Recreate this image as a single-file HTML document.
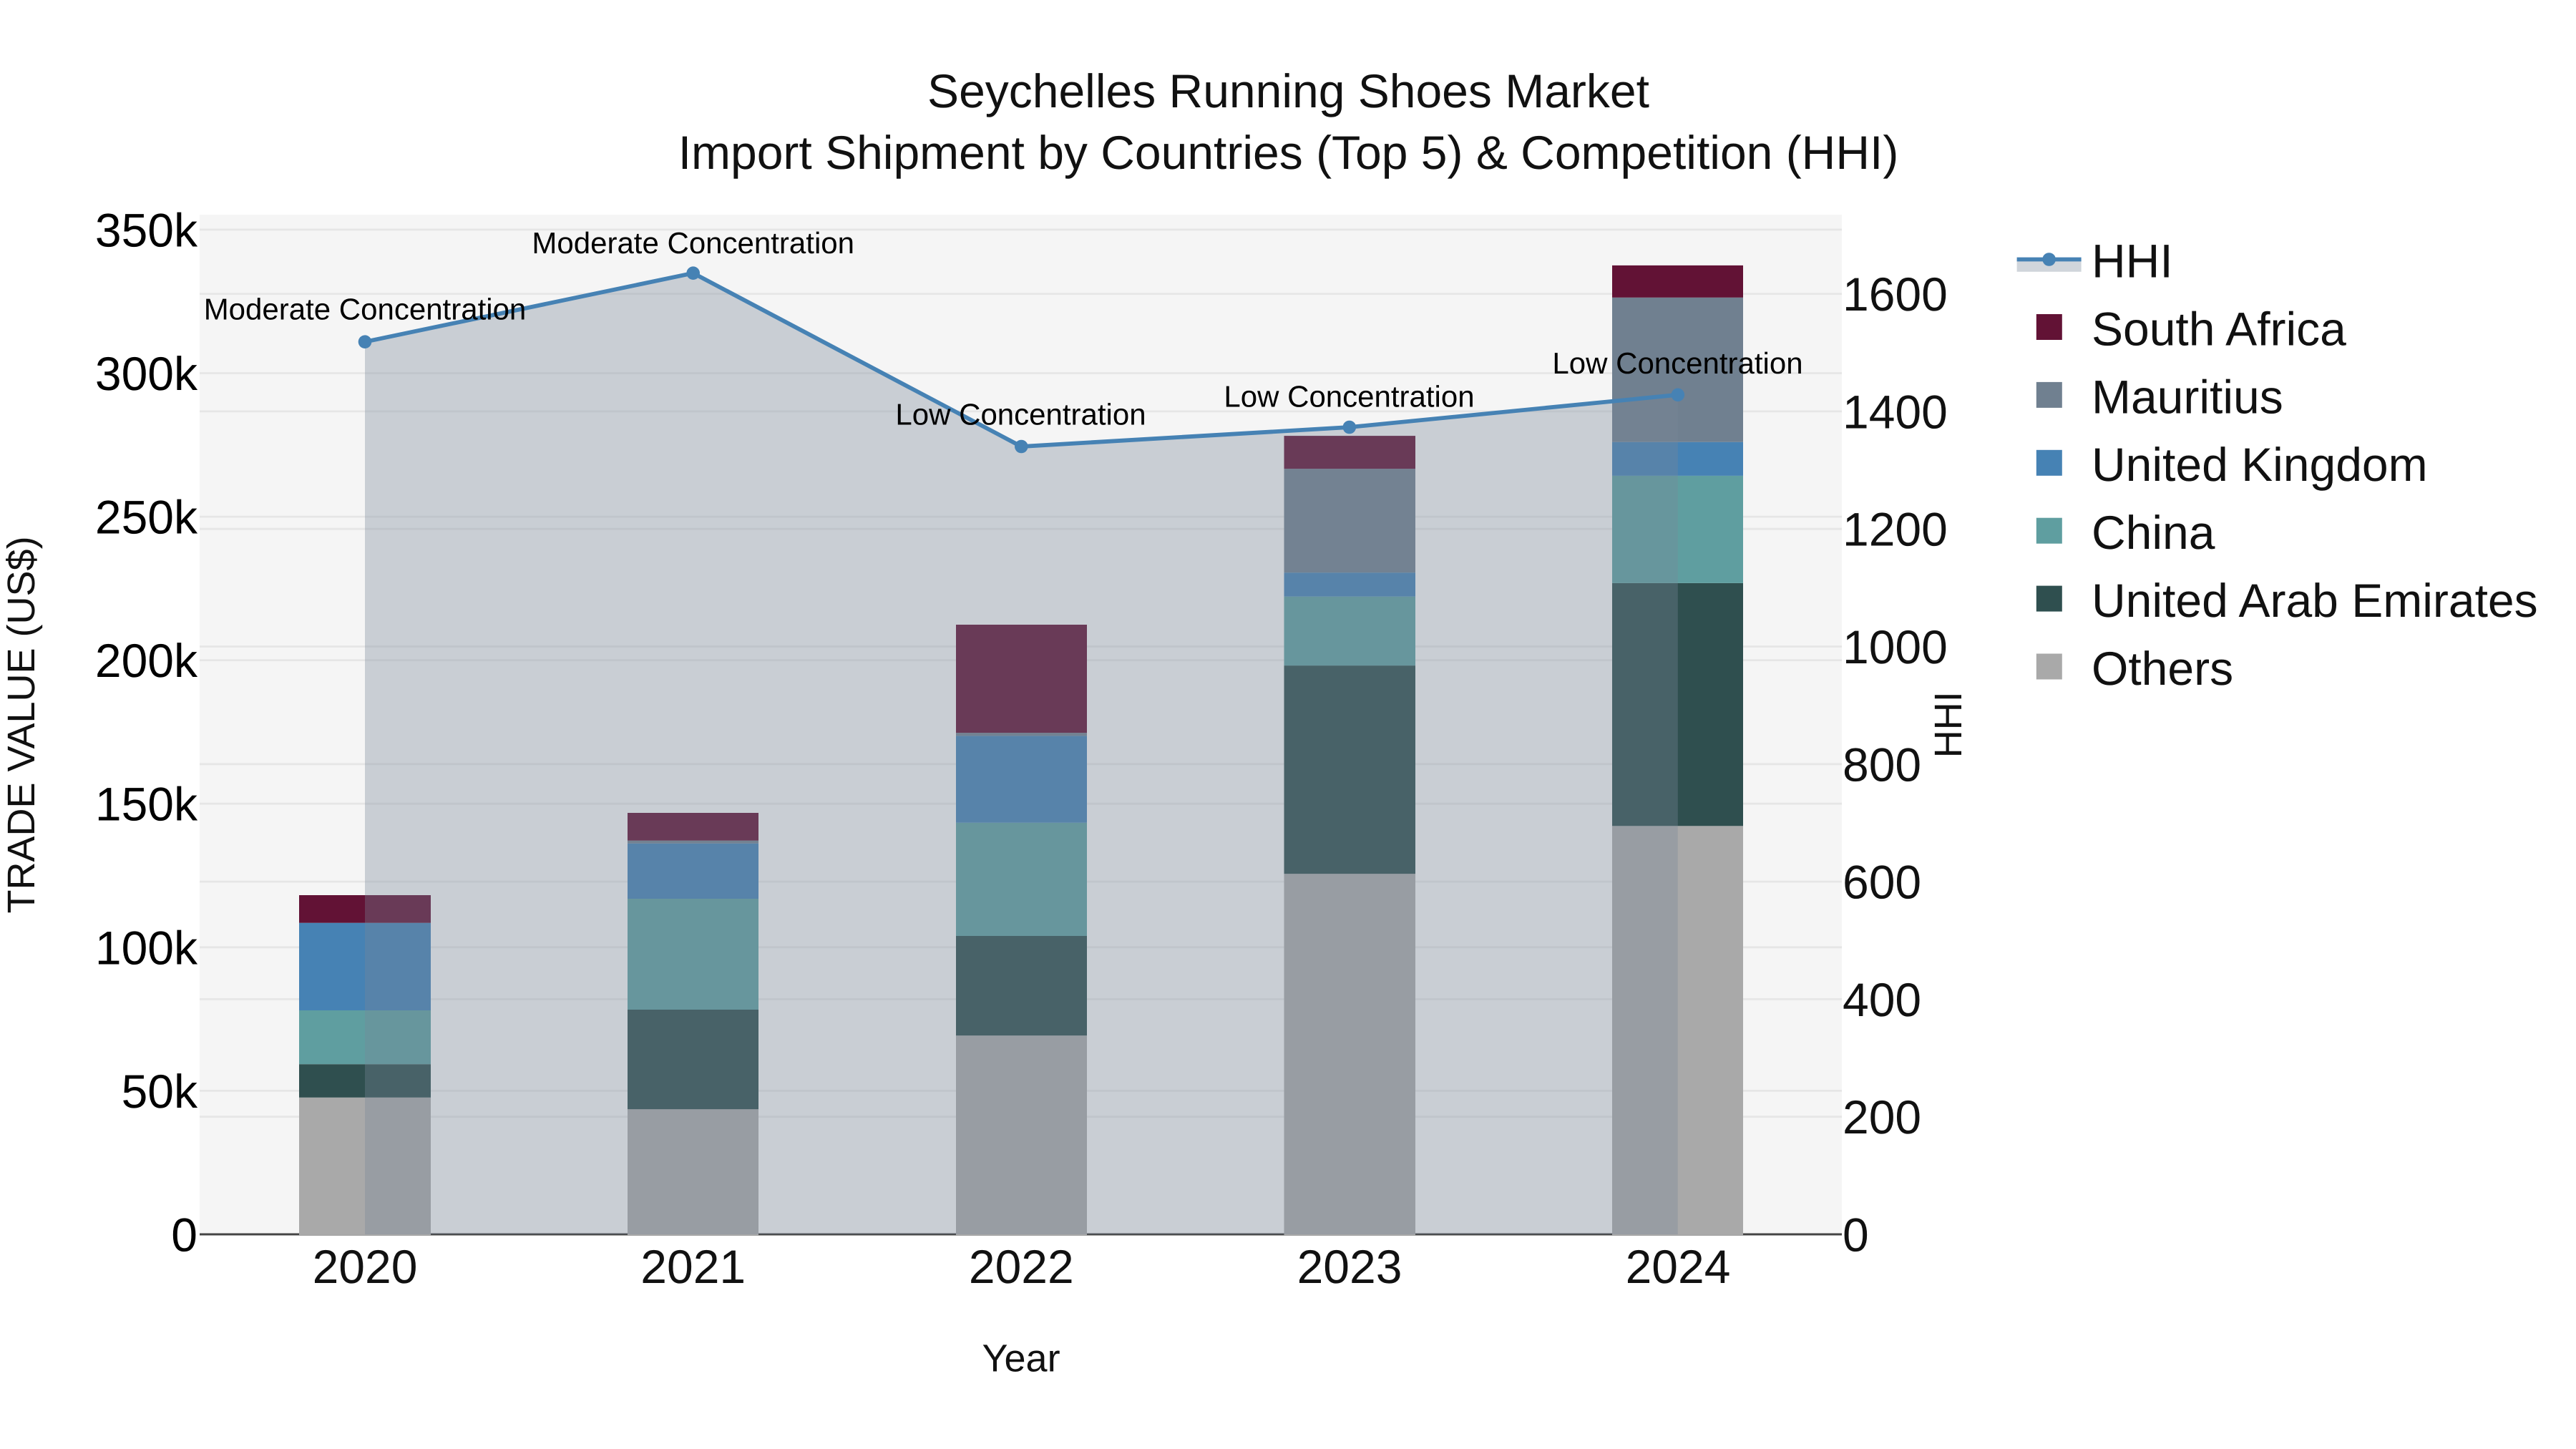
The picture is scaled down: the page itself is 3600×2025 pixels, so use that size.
<!DOCTYPE html>
<html lang="en"><head><meta charset="utf-8"><title>Seychelles Running Shoes Market</title>
<style>
html,body{margin:0;padding:0;background:#fff;width:3600px;height:2025px;overflow:hidden}
svg{display:block}
text{font-family:"Liberation Sans",Arial,sans-serif;fill:#111;text-rendering:geometricPrecision;white-space:pre}
.t{font-size:66px}
.a{font-size:42px;fill:#000;text-anchor:middle}
.k{font-size:66px;fill:#000;text-anchor:end}
.x{font-size:66px;text-anchor:middle}
.at{font-size:54px}
</style></head><body>
<svg width="3600" height="2025" viewBox="0 0 3600 2025" xmlns="http://www.w3.org/2000/svg">
<rect width="3600" height="2025" fill="#fff"/>
<rect x="279" y="300" width="2295" height="1425" fill="#f5f5f5"/>
<g stroke="#e6e6e6" stroke-width="2.8" fill="none">
<path d="M279 320.9H2574M279 521.5H2574M279 722.1H2574M279 922.6H2574M279 1123.2H2574M279 1323.8H2574M279 1524.4H2574"/>
<path d="M279 410.6H2574M279 574.9H2574M279 739.2H2574M279 903.5H2574M279 1067.8H2574M279 1232.1H2574M279 1396.4H2574M279 1560.7H2574"/>
</g>
<rect x="279" y="1723.5" width="2295" height="3" fill="#444"/>
<g>
<rect x="418" y="1533.8" width="184" height="192.2" fill="#a9a9a9"/>
<rect x="418" y="1487.2" width="184" height="46.6" fill="#2f4f4f"/>
<rect x="418" y="1412" width="184" height="75.2" fill="#5f9ea0"/>
<rect x="418" y="1289.7" width="184" height="122.3" fill="#4682b4"/>
<rect x="418" y="1251" width="184" height="38.7" fill="#621235"/>

<rect x="877" y="1550.2" width="183" height="175.8" fill="#a9a9a9"/>
<rect x="877" y="1411" width="183" height="139.2" fill="#2f4f4f"/>
<rect x="877" y="1256" width="183" height="155" fill="#5f9ea0"/>
<rect x="877" y="1178.7" width="183" height="77.3" fill="#4682b4"/>
<rect x="877" y="1174.7" width="183" height="4" fill="#708090"/>
<rect x="877" y="1136" width="183" height="38.7" fill="#621235"/>

<rect x="1336" y="1447.2" width="183" height="278.8" fill="#a9a9a9"/>
<rect x="1336" y="1308" width="183" height="139.2" fill="#2f4f4f"/>
<rect x="1336" y="1149.8" width="183" height="158.2" fill="#5f9ea0"/>
<rect x="1336" y="1028.4" width="183" height="121.4" fill="#4682b4"/>
<rect x="1336" y="1024.1" width="183" height="4.3" fill="#708090"/>
<rect x="1336" y="873" width="183" height="151.1" fill="#621235"/>

<rect x="1794.5" y="1221.2" width="183.5" height="504.8" fill="#a9a9a9"/>
<rect x="1794.5" y="930.1" width="183.5" height="291.1" fill="#2f4f4f"/>
<rect x="1794.5" y="833.7" width="183.5" height="96.4" fill="#5f9ea0"/>
<rect x="1794.5" y="800.2" width="183.5" height="33.5" fill="#4682b4"/>
<rect x="1794.5" y="655.1" width="183.5" height="145.1" fill="#708090"/>
<rect x="1794.5" y="609.1" width="183.5" height="46" fill="#621235"/>

<rect x="2253" y="1154.3" width="183" height="571.7" fill="#a9a9a9"/>
<rect x="2253" y="814.9" width="183" height="339.4" fill="#2f4f4f"/>
<rect x="2253" y="664.9" width="183" height="150" fill="#5f9ea0"/>
<rect x="2253" y="617.7" width="183" height="47.2" fill="#4682b4"/>
<rect x="2253" y="415.8" width="183" height="201.9" fill="#708090"/>
<rect x="2253" y="370.9" width="183" height="44.9" fill="#621235"/>
</g>
<path d="M510 477.7L968.7 381.7L1427.3 624L1885.8 597L2344.8 551.8V1725H510Z" fill="rgb(119,136,153)" fill-opacity=".35"/>
<path d="M510 477.7L968.7 381.7L1427.3 624L1885.8 597L2344.8 551.8" fill="none" stroke="#4682b4" stroke-width="5.8"/>
<g fill="#4682b4">
<circle cx="510" cy="477.7" r="9.3"/><circle cx="968.7" cy="381.7" r="9.3"/><circle cx="1427.3" cy="624" r="9.3"/><circle cx="1885.8" cy="597" r="9.3"/><circle cx="2344.8" cy="551.8" r="9.3"/>
</g>
<text class="a" x="510" y="446.4">Moderate Concentration</text>
<text class="a" x="968.7" y="354">Moderate Concentration</text>
<text class="a" x="1426.5" y="593.3">Low Concentration</text>
<text class="a" x="1885.5" y="568.6">Low Concentration</text>
<text class="a" x="2344.5" y="522">Low Concentration</text>

<text class="t" x="1800.5" y="150" text-anchor="middle">Seychelles Running Shoes Market</text>
<text class="t" x="1800.5" y="236" text-anchor="middle">Import Shipment by Countries (Top 5) &amp; Competition (HHI)</text>

<text class="k" x="276" y="344.4">350k</text>
<text class="k" x="276" y="545">300k</text>
<text class="k" x="276" y="745.6">250k</text>
<text class="k" x="276" y="946.1">200k</text>
<text class="k" x="276" y="1146.7">150k</text>
<text class="k" x="276" y="1347.3">100k</text>
<text class="k" x="276" y="1547.9">50k</text>
<text class="k" x="276" y="1748.5">0</text>

<text class="t" x="2575" y="434.1">1600</text>
<text class="t" x="2575" y="598.4">1400</text>
<text class="t" x="2575" y="762.7">1200</text>
<text class="t" x="2575" y="927">1000</text>
<text class="t" x="2575" y="1091.3">800</text>
<text class="t" x="2575" y="1255.6">600</text>
<text class="t" x="2575" y="1419.9">400</text>
<text class="t" x="2575" y="1584.2">200</text>
<text class="t" x="2575" y="1748.5">0</text>

<text class="x" x="510" y="1793">2020</text>
<text class="x" x="968.7" y="1793">2021</text>
<text class="x" x="1427.3" y="1793">2022</text>
<text class="x" x="1886" y="1793">2023</text>
<text class="x" x="2345" y="1793">2024</text>

<text class="at" x="1427" y="1916.7" text-anchor="middle">Year</text>
<text class="at" transform="translate(47.8 1013) rotate(-90)" text-anchor="middle">TRADE VALUE (US$)</text>
<text class="at" transform="translate(2741 1012.7) rotate(-90)" text-anchor="middle">HHI</text>

<rect x="2818.6" y="362.5" width="90" height="17.3" fill="rgb(119,136,153)" fill-opacity=".35"/>
<path d="M2818.6 362.5H2908.6" stroke="#4682b4" stroke-width="5.8"/>
<circle cx="2863.6" cy="362.5" r="9.3" fill="#4682b4"/>
<rect x="2845.8" y="439" width="36" height="36" fill="#621235"/>
<rect x="2845.8" y="533.9" width="36" height="36" fill="#708090"/>
<rect x="2845.8" y="628.8" width="36" height="36" fill="#4682b4"/>
<rect x="2845.8" y="723.7" width="36" height="36" fill="#5f9ea0"/>
<rect x="2845.8" y="818.6" width="36" height="36" fill="#2f4f4f"/>
<rect x="2845.8" y="913.5" width="36" height="36" fill="#a9a9a9"/>
<text class="t" x="2923" y="387.5">HHI</text>
<text class="t" x="2923" y="482.4">South Africa</text>
<text class="t" x="2923" y="577.3">Mauritius</text>
<text class="t" x="2923" y="672.2">United Kingdom</text>
<text class="t" x="2923" y="767.1">China</text>
<text class="t" x="2923" y="862">United Arab Emirates</text>
<text class="t" x="2923" y="956.9">Others</text>
</svg>
</body></html>
